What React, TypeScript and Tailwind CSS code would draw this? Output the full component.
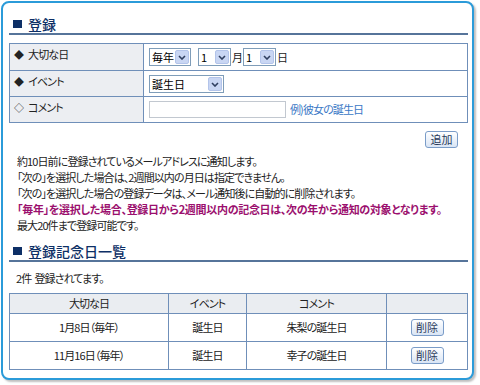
import React from 'react';

const Chevron = () => (
  <svg width="8" height="5" viewBox="0 0 8 5">
    <path d="M1 1 L4 4 L7 1" fill="none" stroke="#2f3f5f" strokeWidth="1.6" />
  </svg>
);

const FakeSelect: React.FC<{ value: string; w: string }> = ({ value, w }) => (
  <span className={`inline-flex h-[18px] ${w} items-stretch border border-[#7f9db9] bg-white align-middle`}>
    <span className="flex-1 whitespace-nowrap pl-[2px] text-[11px] leading-[16px] tracking-[0px] text-black">{value}</span>
    <span className="m-px flex w-[14px] shrink-0 items-center justify-center rounded-[2px] border border-[#b3c4ea] bg-[#c9d6f3]">
      <Chevron />
    </span>
  </span>
);

const SmallButton: React.FC<{ label: string }> = ({ label }) => (
  <button className="h-[17px] w-[33px] rounded-[3px] border border-[#7a9cc8] bg-gradient-to-b from-white to-[#d9e5f5] text-[11px] leading-[15px] tracking-[0px] text-[#2a3a5a]">
    {label}
  </button>
);

const Heading: React.FC<{ title: string }> = ({ title }) => (
  <div className="flex h-[20px] items-center border-b-2 border-[#56749a] pl-[4px]">
    <span className="h-[8px] w-[9px] bg-[#0d2f66]" />
    <span className="ml-[6px] text-[14px] font-medium leading-[18px] tracking-[0px] text-[#0d2f66]">{title}</span>
  </div>
);

const Label: React.FC<{ mark: string; text: string }> = ({ mark, text }) => (
  <span className="inline-flex items-center">
    <span className="mr-[5px] text-[10px]">{mark}</span>
    <span>{text}</span>
  </span>
);

const labelCell = 'border border-[#6f8fb9] bg-[#eceef2] pl-[4px] pt-[2px] align-top text-left';
const valueCell = 'border border-[#6f8fb9] bg-white pl-[5px] align-middle';
const th = 'border border-[#6f8fb9] bg-[#eaedf1] h-[20px] text-center font-normal';
const td = 'border border-[#6f8fb9] bg-white text-center';

const rows = [
  { date: '1月8日（毎年）', event: '誕生日', comment: '朱梨の誕生日' },
  { date: '11月16日（毎年）', event: '誕生日', comment: '幸子の誕生日' },
];

export default function App() {
  return (
    <div className="h-[385px] w-[480px] bg-white pl-px pt-px font-['Noto_Sans_CJK_JP','Noto_Sans',sans-serif] text-[11px] tracking-[-0.9px] text-[#222] [font-feature-settings:'palt']">
      <div className="h-[379px] w-[473px] rounded-[8px] border-2 border-[#2b9bd9] bg-white pl-[6px] pr-[4px] pt-[12px] shadow-[2px_2px_2px_rgba(0,0,0,0.25)]">
        <Heading title="登録" />

        <table className="mt-[8px] w-[459px] border-collapse">
          <tbody>
            <tr className="h-[27px]">
              <td className={`${labelCell} w-[134px]`}>
                <Label mark="◆" text="大切な日" />
              </td>
              <td className={valueCell}>
                <div className="flex items-center">
                  <FakeSelect value="毎年" w="w-[42px]" />
                  <span className="w-[7px]" />
                  <FakeSelect value="1" w="w-[33px]" />
                  <span className="px-px text-[11px]">月</span>
                  <FakeSelect value="1" w="w-[33px]" />
                  <span className="px-px text-[11px]">日</span>
                </div>
              </td>
            </tr>
            <tr className="h-[26px]">
              <td className={labelCell}>
                <Label mark="◆" text="イベント" />
              </td>
              <td className={valueCell}>
                <FakeSelect value="誕生日" w="w-[75px]" />
              </td>
            </tr>
            <tr className="h-[26px]">
              <td className={labelCell}>
                <Label mark="◇" text="コメント" />
              </td>
              <td className={valueCell}>
                <div className="flex items-center">
                  <input className="h-[17px] w-[137px] border border-[#c2c8d0] bg-white outline-none" />
                  <span className="ml-[4px] text-[11px] text-[#3a78c6]">例)彼女の誕生日</span>
                </div>
              </td>
            </tr>
          </tbody>
        </table>

        <div className="mt-[8px] flex justify-end pr-[10px]">
          <SmallButton label="追加" />
        </div>

        <div className="mt-[5px] pl-[8px] leading-[16px]">
          <p>約10日前に登録されているメールアドレスに通知します。</p>
          <p>「次の」を選択した場合は、2週間以内の月日は指定できません。</p>
          <p>「次の」を選択した場合の登録データは、メール通知後に自動的に削除されます。</p>
          <p className="font-bold tracking-[-0.3px] text-[#9b0f6e]">「毎年」を選択した場合、登録日から2週間以内の記念日は、次の年から通知の対象となります。</p>
          <p>最大20件まで登録可能です。</p>
        </div>

        <div className="mt-[9px]">
          <Heading title="登録記念日一覧" />
        </div>

        <p className="mt-[8px] pl-[7px] leading-[16px]">2件&nbsp;&nbsp;登録されてます。</p>

        <table className="mt-[7px] w-[459px] border-collapse">
          <thead>
            <tr>
              <th className={`${th} w-[159px]`}>大切な日</th>
              <th className={`${th} w-[78px]`}>イベント</th>
              <th className={`${th} w-[140px]`}>コメント</th>
              <th className={th}></th>
            </tr>
          </thead>
          <tbody>
            {rows.map((r, i) => (
              <tr key={i} className="h-[28px]">
                <td className={td}>{r.date}</td>
                <td className={td}>{r.event}</td>
                <td className={td}>{r.comment}</td>
                <td className={td}>
                  <SmallButton label="削除" />
                </td>
              </tr>
            ))}
          </tbody>
        </table>
      </div>
    </div>
  );
}
